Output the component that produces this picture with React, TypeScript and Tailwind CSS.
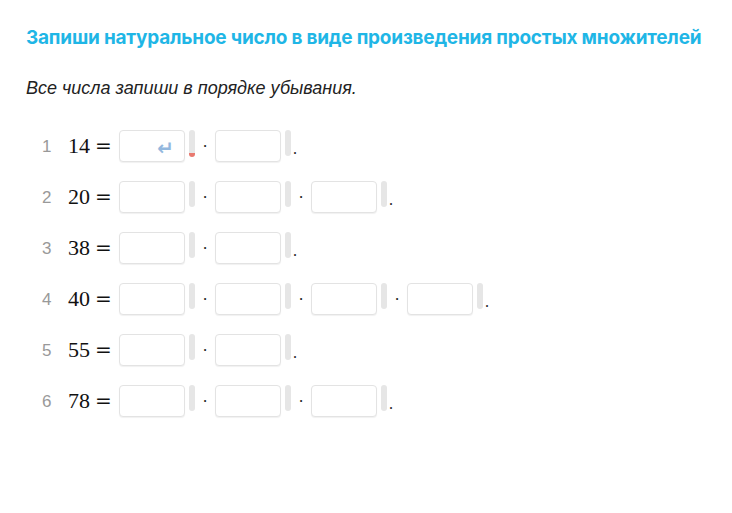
import React from "react";

const rows = [
  { n: 1, num: "14", boxes: 2, active: true },
  { n: 2, num: "20", boxes: 3 },
  { n: 3, num: "38", boxes: 2 },
  { n: 4, num: "40", boxes: 4 },
  { n: 5, num: "55", boxes: 2 },
  { n: 6, num: "78", boxes: 3 },
];

const Box = ({ active, caret }: { active?: boolean; caret?: boolean }) => (
  <div className="flex items-start">
    <div className="relative h-[32px] w-[66px] rounded-[4px] border border-[#e3e3e3] bg-white shadow-[0_1px_1px_rgba(0,0,0,0.06)]">
      {active && (
        <span className="absolute right-[10px] top-[2px] font-['DejaVu_Sans',sans-serif] text-[20px] font-bold text-[#93b8de]">
          ↵
        </span>
      )}
    </div>
    <div className="relative ml-[4px] h-[26px] w-[6px] rounded-[3px] bg-[#e6e6e6]">
      {caret && (
        <span className="absolute bottom-[-1px] left-0 h-[4px] w-[6px] rounded-b-[3px] bg-[#e9796f]" />
      )}
    </div>
  </div>
);

export default function App() {
  return (
    <div className="h-[513px] w-[732px] bg-white px-[26px] pt-[26px]">
      <h1 className="font-['Inter',sans-serif] text-[19px] font-bold leading-[24px] tracking-[-0.22px] text-[#1fb6e6]">
        Запиши натуральное число в виде произведения простых множителей
      </h1>
      <p className="mt-[27px] font-['Liberation_Sans',sans-serif] text-[18px] italic leading-[22px] text-[#222]">
        Все числа запиши в порядке убывания.
      </p>
      <div className="mt-[31px] flex flex-col gap-[19px]">
        {rows.map((r) => (
          <div key={r.n} className="flex h-[32px] items-start">
            <span className="mt-[7px] w-[42px] pl-[16px] font-['Liberation_Sans',sans-serif] text-[17px] leading-[20px] text-[#999]">
              {r.n}
            </span>
            <span className="mt-[3px] flex w-[51px] items-baseline font-['Liberation_Serif',serif] text-[22px] leading-[26px] text-[#111]">
              {r.num}
              <span className="ml-[5px] font-['DejaVu_Serif',serif] text-[20px]">=</span>
            </span>
            {Array.from({ length: r.boxes }).map((_, i) => (
              <React.Fragment key={i}>
                {i > 0 && (
                  <span className="mt-[7px] w-[20px] text-center font-['Liberation_Serif',serif] text-[17px] leading-[20px] text-[#222]">
                    ·
                  </span>
                )}
                <Box active={r.active && i === 0} caret={r.active && i === 0} />
              </React.Fragment>
            ))}
            <span className="ml-[2px] mt-[9px] font-['Liberation_Serif',serif] text-[16px] leading-[20px] text-[#222]">
              .
            </span>
          </div>
        ))}
      </div>
    </div>
  );
}
